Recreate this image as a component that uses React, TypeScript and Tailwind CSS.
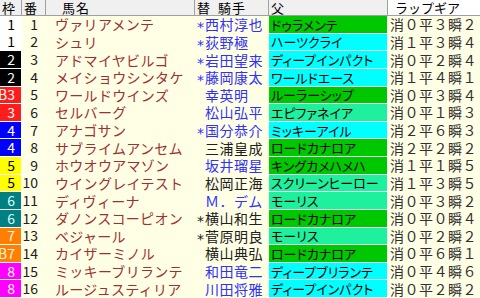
const FONT = "font-['Noto_Sans_CJK_JP',sans-serif]";

type Row = {
  waku: string;
  no: number;
  name: string;
  change: boolean;
  jockey: string;
  blue: boolean;
  sire: string;
  sireBg: string;
  gear: string;
};

const WAKU_STYLE: Record<string, string> = {
  '1': 'bg-white text-black',
  '2': 'bg-black text-white',
  '3': 'bg-[#ff1c1c] text-white',
  '4': 'bg-[#0000ff] text-white',
  '5': 'bg-[#ffff00] text-black',
  '6': 'bg-[#008080] text-[#d8ffff]',
  '7': 'bg-[#ff8000] text-[#fff4e0]',
  '8': 'bg-[#ff00ff] text-white',
};

const GREEN = 'bg-[#00c800]';
const CYAN = 'bg-[#00ffff]';
const MINT = 'bg-[#1ef09e]';

const rows: Row[] = [
  { waku: '1', no: 1, name: 'ヴァリアメンテ', change: true, jockey: '西村淳也', blue: true, sire: 'ドゥラメンテ', sireBg: GREEN, gear: '消０平３瞬２' },
  { waku: '1', no: 2, name: 'シュリ', change: true, jockey: '荻野極', blue: true, sire: 'ハーツクライ', sireBg: CYAN, gear: '消１平３瞬４' },
  { waku: '2', no: 3, name: 'アドマイヤビルゴ', change: true, jockey: '岩田望来', blue: true, sire: 'ディープインパクト', sireBg: CYAN, gear: '消０平２瞬４' },
  { waku: '2', no: 4, name: 'メイショウシンタケ', change: true, jockey: '藤岡康太', blue: true, sire: 'ワールドエース', sireBg: CYAN, gear: '消１平４瞬１' },
  { waku: 'B3', no: 5, name: 'ワールドウインズ', change: false, jockey: '幸英明', blue: true, sire: 'ルーラーシップ', sireBg: GREEN, gear: '消０平３瞬４' },
  { waku: '3', no: 6, name: 'セルバーグ', change: false, jockey: '松山弘平', blue: true, sire: 'エピファネイア', sireBg: MINT, gear: '消０平１瞬３' },
  { waku: '4', no: 7, name: 'アナゴサン', change: true, jockey: '国分恭介', blue: true, sire: 'ミッキーアイル', sireBg: CYAN, gear: '消２平６瞬３' },
  { waku: '4', no: 8, name: 'サブライムアンセム', change: false, jockey: '三浦皇成', blue: false, sire: 'ロードカナロア', sireBg: GREEN, gear: '消２平２瞬２' },
  { waku: '5', no: 9, name: 'ホウオウアマゾン', change: false, jockey: '坂井瑠星', blue: true, sire: 'キングカメハメハ', sireBg: GREEN, gear: '消１平１瞬５' },
  { waku: '5', no: 10, name: 'ウイングレイテスト', change: false, jockey: '松岡正海', blue: false, sire: 'スクリーンヒーロー', sireBg: MINT, gear: '消１平３瞬５' },
  { waku: '6', no: 11, name: 'ディヴィーナ', change: false, jockey: 'Ｍ．デム', blue: true, sire: 'モーリス', sireBg: MINT, gear: '消０平３瞬２' },
  { waku: '6', no: 12, name: 'ダノンスコーピオン', change: true, jockey: '横山和生', blue: false, sire: 'ロードカナロア', sireBg: GREEN, gear: '消０平０瞬４' },
  { waku: '7', no: 13, name: 'ベジャール', change: true, jockey: '菅原明良', blue: false, sire: 'モーリス', sireBg: MINT, gear: '消０平２瞬２' },
  { waku: 'B7', no: 14, name: 'カイザーミノル', change: false, jockey: '横山典弘', blue: false, sire: 'ロードカナロア', sireBg: GREEN, gear: '消０平６瞬１' },
  { waku: '8', no: 15, name: 'ミッキーブリランテ', change: false, jockey: '和田竜二', blue: true, sire: 'ディープブリランテ', sireBg: CYAN, gear: '消０平４瞬６' },
  { waku: '8', no: 16, name: 'ルージュスティリア', change: false, jockey: '川田将雅', blue: true, sire: 'ディープインパクト', sireBg: CYAN, gear: '消０平２瞬２' },
];

function HeaderCell({ children, className = '' }: { children: React.ReactNode; className?: string }) {
  return (
    <div className={`flex items-center bg-[#f0f0f0] border-r border-b border-[#a0a0a0] text-[13px] text-black leading-[14px] ${className}`}>
      {children}
    </div>
  );
}

export default function App() {
  return (
    <div
      className={`grid grid-cols-[22px_24px_149px_74px_119px_92px] grid-rows-[16px_repeat(16,minmax(0,1fr))] w-[480px] h-[298px] bg-[#ffffe5] overflow-hidden ${FONT}`}
    >
      {/* header */}
      <HeaderCell className="pl-[2px]">枠</HeaderCell>
      <HeaderCell className="pl-[2px]">番</HeaderCell>
      <HeaderCell className="pl-[16px] tracking-[1px]">馬名</HeaderCell>
      <HeaderCell className="pl-[2px]">
        <span>替</span>
        <span className="ml-[8px] tracking-[1px]">騎手</span>
      </HeaderCell>
      <HeaderCell className="pl-[2px]">父</HeaderCell>
      <HeaderCell className="pl-[7px] text-[11px] text-[#404040] border-r-0 bg-white">ラップギア</HeaderCell>

      {rows.map((r) => (
        <div key={r.no} className="contents">
          <div className={`flex items-center justify-end pr-[6px] border-r border-b border-white text-[14px] leading-[15px] ${WAKU_STYLE[r.waku.replace('B', '')]}`}>
            {r.waku}
          </div>
          <div className="flex items-center justify-end pr-[8px] border-b border-[#fffff4] text-[14px] text-[#202020] leading-[15px]">
            {r.no}
          </div>
          <div className="flex items-center pl-[9px] text-[14px] tracking-[0.3px] text-[#a03030] leading-[15px] whitespace-nowrap">
            {r.name}
          </div>
          <div className={`flex items-center pl-[2px] text-[14px] leading-[15px] whitespace-nowrap ${r.blue ? 'text-[#3030ff]' : 'text-[#202020]'}`}>
            <span className="w-[8px] text-[14px] font-['DejaVu_Sans',sans-serif] translate-y-[3px]">{r.change ? '*' : ''}</span>
            <span className="tracking-[0.5px]">{r.jockey}</span>
          </div>
          <div className={`flex items-center pl-[2px] border-b border-r border-[#e8fff4] text-[13px] text-black leading-[15px] whitespace-nowrap [font-feature-settings:'palt'] ${r.sireBg}`}>
            {r.sire}
          </div>
          <div className="flex items-center pl-[2px] text-[14px] tracking-[0.5px] text-[#303030] leading-[15px] whitespace-nowrap">
            {r.gear}
          </div>
        </div>
      ))}
    </div>
  );
}
